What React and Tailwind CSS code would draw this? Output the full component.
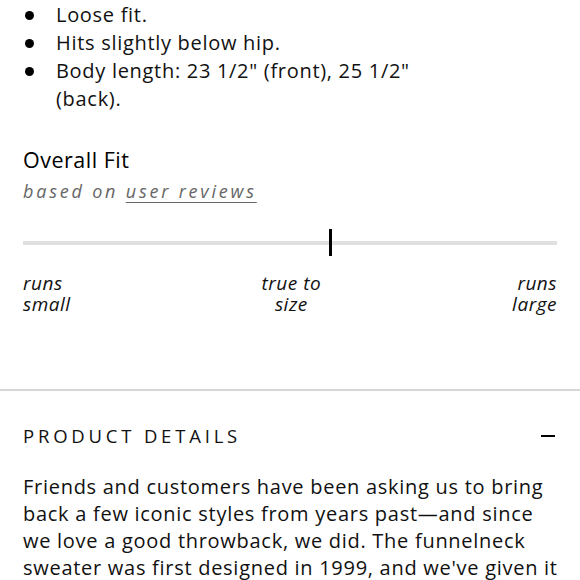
export default function App() {
  const font = { fontFamily: "'Open Sans', 'Noto Sans', sans-serif" };
  const Dot = () => (
    <span className="absolute left-[-31px] top-[10px] w-[9px] h-[9px] rounded-full bg-black" />
  );
  return (
    <div className="w-[580px] h-[580px] overflow-hidden bg-white text-[#111]" style={font}>
      <ul className="pt-[1px] pl-[56px] pr-[23px] text-[20px] tracking-[0.7px] leading-[28px]">
        <li className="relative">
          <Dot />
          Loose fit.
        </li>
        <li className="relative">
          <Dot />
          Hits slightly below hip.
        </li>
        <li className="relative w-[380px]">
          <Dot />
          Body length: 23 1/2" (front), 25 1/2" (back).
        </li>
      </ul>
      <div className="px-[23px] pt-[33px]">
        <div className="text-[21.5px] tracking-[0.5px] leading-[28px] text-black">Overall Fit</div>
        <div className="mt-[5px] text-[18px] italic tracking-[2.8px] text-[#666] leading-[24px]">
          based on <span className="underline underline-offset-[4px]">user reviews</span>
        </div>
        <div className="relative mt-[38px] h-[4px] bg-[#e0e0e0]">
          <div className="absolute left-[306px] top-[-12px] w-[3px] h-[27px] bg-black" />
        </div>
        <div className="mt-[28px] flex justify-between text-[19px] tracking-[0.5px] italic leading-[21px] text-[#111]">
          <div className="flex flex-col">
            <span>runs</span>
            <span>small</span>
          </div>
          <div className="flex flex-col items-center">
            <span>true to</span>
            <span>size</span>
          </div>
          <div className="flex flex-col items-end">
            <span>runs</span>
            <span>large</span>
          </div>
        </div>
      </div>
      <div className="mt-[74px] border-t-2 border-[#d6d6d6]" />
      <div className="px-[23px] pt-[33px] flex items-center justify-between">
        <div className="text-[18.5px] tracking-[3.8px] leading-[24px]">PRODUCT DETAILS</div>
        <div className="w-[14px] h-[2px] bg-black mr-[2px]" />
      </div>
      <p className="pl-[23px] pr-[14px] pt-[25px] text-[20px] tracking-[0.72px] leading-[27px] text-[#111]">
        Friends and customers have been asking us to bring back a few iconic styles from years past—and since we love a good throwback, we did. The funnelneck sweater was first designed in 1999, and we've given it
      </p>
    </div>
  );
}
